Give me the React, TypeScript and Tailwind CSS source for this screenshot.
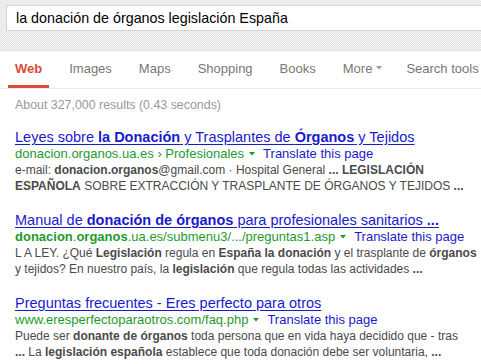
const tabs = ["Images", "Maps", "Shopping", "Books"];

function Caret({ color }: { color: string }) {
  return (
    <svg width="6" height="4" viewBox="0 0 6 4" className="shrink-0">
      <path d="M0 0 H6 L3 3.5 Z" fill={color} />
    </svg>
  );
}

function UrlLine({ children }: { children: React.ReactNode }) {
  return (
    <div className="flex items-center h-[16px] text-[13px] leading-[16px] whitespace-nowrap">
      <span className="text-[#1e9a2e]">{children}</span>
      <span className="ml-[5px] mr-[8px]">
        <Caret color="#1e9a2e" />
      </span>
      <span className="text-[#1a1acc]">Translate this page</span>
    </div>
  );
}

function Result({
  title,
  url,
  lines,
}: {
  title: React.ReactNode;
  url: React.ReactNode;
  lines: React.ReactNode[];
}) {
  return (
    <div className="mb-[17px]">
      <div className="h-[18px] text-[14.5px] leading-[18px] text-[#1a1acc] underline underline-offset-[2px] whitespace-nowrap">
        {title}
      </div>
      <UrlLine>{url}</UrlLine>
      <div className="text-[12px] leading-[16px] text-[#4a4a4a] whitespace-nowrap">
        {lines.map((l, i) => (
          <div key={i}>{l}</div>
        ))}
      </div>
    </div>
  );
}

export default function App() {
  return (
    <div className="w-[481px] h-[364px] overflow-hidden bg-white font-['Liberation_Sans',Arial,sans-serif]">
      {/* header band */}
      <div className="h-[51px] pt-[5px] pl-[6px] border-b border-[#e0e0e0] bg-[#ececec] bg-[repeating-conic-gradient(#e2e2e2_0_25%,#f5f5f5_0_50%)] bg-[length:2px_2px]">
        <div className="h-[26px] w-[500px] bg-white border border-[#d4d4d4] pl-[9px] text-[14.3px] leading-[25px] text-black whitespace-nowrap">
          la donación de órganos legislación España
        </div>
      </div>

      {/* tabs */}
      <div className="h-[38px] flex items-stretch gap-[13px] pl-[8px] border-b border-[#ebebeb] text-[13px] text-[#777] whitespace-nowrap">
        <div className="px-[7px] pt-[8px] font-bold text-[#dd4b39] border-b-[3px] border-[#dd4b39]">Web</div>
        {tabs.map((t) => (
          <div key={t} className="px-[7px] pt-[8px]">
            {t}
          </div>
        ))}
        <div className="px-[7px] pt-[8px] flex items-start gap-[4px]">
          More
          <span className="mt-[7px]">
            <Caret color="#999" />
          </span>
        </div>
        <div className="pl-[4px] pt-[8px]">Search tools</div>
      </div>

      <div className="pl-[15px]">
        <div className="mt-[8px] mb-[15px] text-[12.4px] leading-[16px] text-[#999]">
          About 327,000 results (0.43 seconds)
        </div>

        <Result
          title={
            <>
              Leyes sobre <b>la Donación</b> y Trasplantes de <b>Órganos</b> y Tejidos
            </>
          }
          url={<>donacion.organos.ua.es › Profesionales</>}
          lines={[
            <>
              e-mail: <b>donacion.organos</b>@gmail.com · Hospital General <b>... LEGISLACIÓN</b>
            </>,
            <>
              <b>ESPAÑOLA</b> SOBRE EXTRACCIÓN Y TRASPLANTE DE ÓRGANOS Y TEJIDOS <b>...</b>
            </>,
          ]}
        />

        <Result
          title={
            <>
              Manual de <b>donación de órganos</b> para profesionales sanitarios <b>...</b>
            </>
          }
          url={
            <>
              <b>donacion</b>.<b>organos</b>.ua.es/submenu3/.../preguntas1.asp
            </>
          }
          lines={[
            <>
              L A LEY. ¿Qué <b>Legislación</b> regula en <b>España la donación</b> y el trasplante de <b>órganos</b>
            </>,
            <>
              y tejidos? En nuestro país, la <b>legislación</b> que regula todas las actividades <b>...</b>
            </>,
          ]}
        />

        <Result
          title={<>Preguntas frecuentes - Eres perfecto para otros</>}
          url={<>www.eresperfectoparaotros.com/faq.php</>}
          lines={[
            <>
              Puede ser <b>donante de órganos</b> toda persona que en vida haya decidido que - tras
            </>,
            <>
              <b>...</b> La <b>legislación española</b> establece que toda donación debe ser voluntaria, <b>...</b>
            </>,
          ]}
        />
      </div>
    </div>
  );
}
